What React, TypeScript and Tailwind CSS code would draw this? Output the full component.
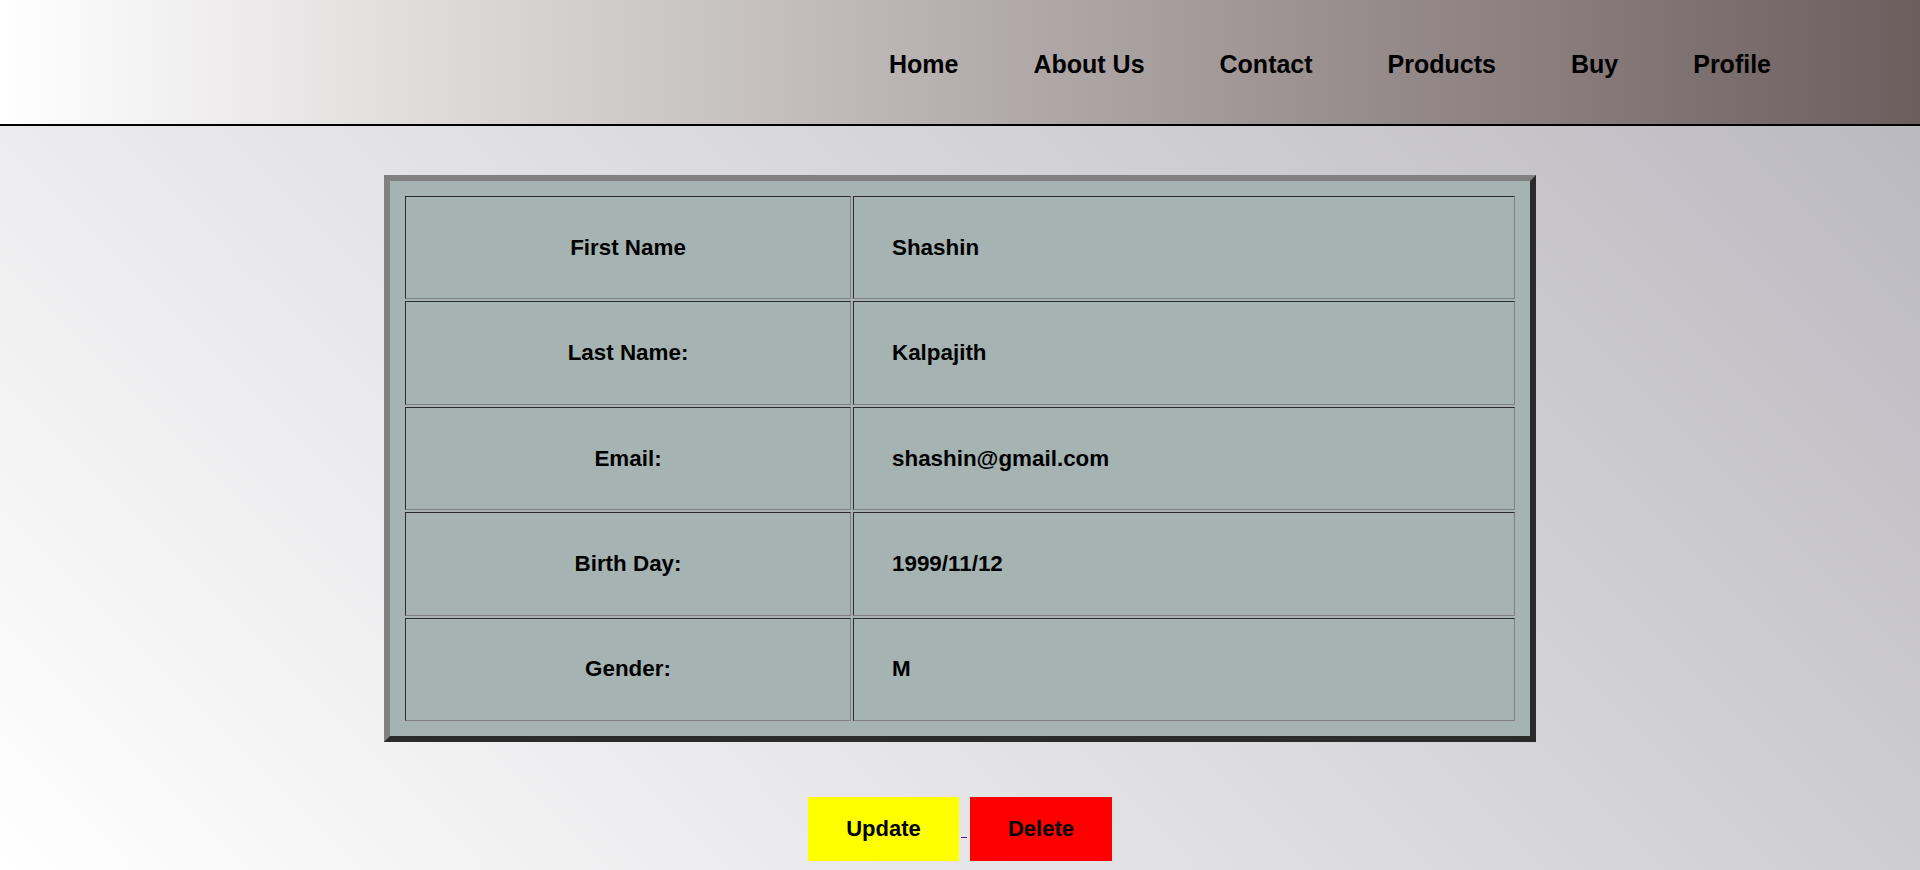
const navLinks = ['Home', 'About Us', 'Contact', 'Products', 'Buy', 'Profile']

const rows = [
  { label: 'First Name', value: 'Shashin' },
  { label: 'Last Name:', value: 'Kalpajith' },
  { label: 'Email:', value: 'shashin@gmail.com' },
  { label: 'Birth Day:', value: '1999/11/12' },
  { label: 'Gender:', value: 'M' },
]

export default function App() {
  return (
    <div className="min-h-screen w-full bg-[linear-gradient(45deg,#ffffff,#b8b6bd)] font-['Liberation_Sans',Arial,sans-serif] text-black">
      {/* Header */}
      <header className="h-[126px] border-b-2 border-black bg-[linear-gradient(to_right,#ffffff,#6d5e5e)]">
        <nav className="flex h-full items-center justify-end gap-[75px] pr-[149px] pt-[4px]">
          {navLinks.map((link) => (
            <a key={link} href="#" className="text-[25px] font-bold leading-none text-black">
              {link}
            </a>
          ))}
        </nav>
      </header>

      {/* Profile table */}
      <div className="mx-auto mt-[49px] w-[1152px] border-[6px] border-t-[#808080] border-l-[#808080] border-b-[#2b2b2b] border-r-[#2b2b2b] bg-[#a5b3b2] p-[13px]">
        <table className="w-full border-separate border-spacing-[2px]">
          <tbody>
            {rows.map((row) => (
              <tr key={row.label} className="h-[103.4px]">
                <td className="w-[446px] border border-t-[#2b2b2b] border-l-[#2b2b2b] border-b-[#808080] border-r-[#808080] text-center text-[22.4px] font-bold">
                  {row.label}
                </td>
                <td className="border border-t-[#2b2b2b] border-l-[#2b2b2b] border-b-[#808080] border-r-[#808080] pl-[38px] text-left text-[22.4px] font-bold">
                  {row.value}
                </td>
              </tr>
            ))}
          </tbody>
        </table>
      </div>

      {/* Actions */}
      <div className="mt-[55px] flex items-end justify-center pb-[9px]">
        <button className="h-[64px] w-[151px] bg-[#ffff00] text-[22px] font-bold text-black">Update</button>
        <span className="mb-[23px] ml-[2px] mr-[3px] h-[1px] w-[6px] bg-[#551a8b]" />
        <button className="h-[64px] w-[142px] bg-[#ff0000] text-[22px] font-bold text-black">Delete</button>
      </div>
    </div>
  )
}
